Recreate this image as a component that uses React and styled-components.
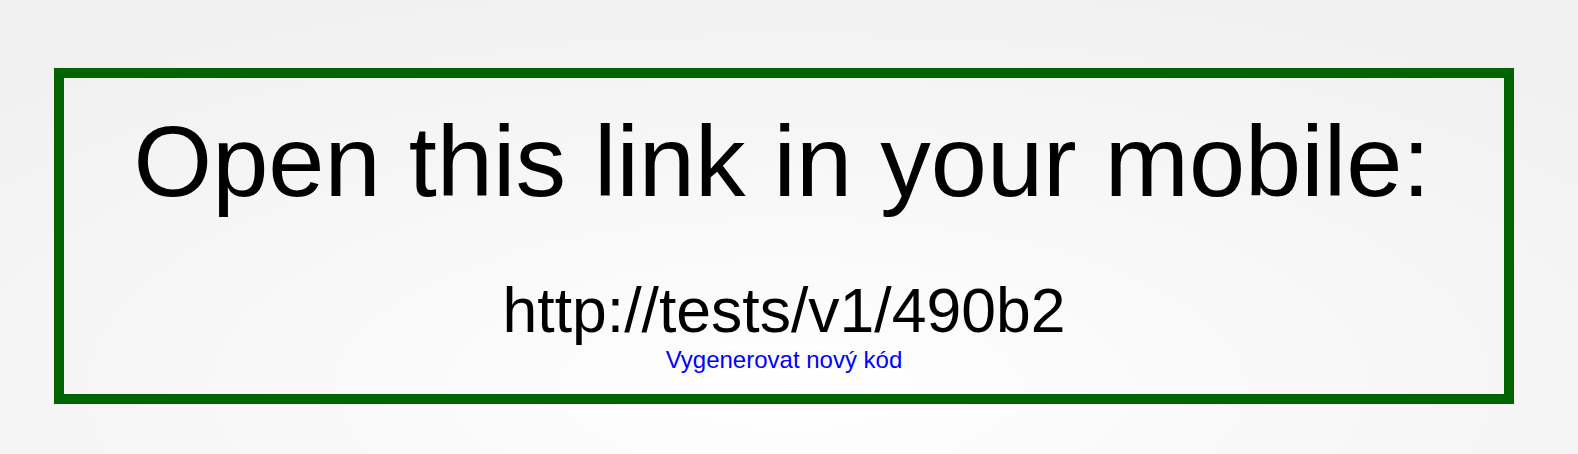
import React from "react";
import styled, { createGlobalStyle } from "styled-components";

const Global = createGlobalStyle`
  html, body {
    margin: 0;
    padding: 0;
  }
  body {
    min-height: 454px;
    background: radial-gradient(ellipse 70% 90% at 50% 85%, #ffffff 0%, #f9f9f9 40%, #f1f1f1 100%);
    font-family: "Liberation Sans", Arial, Helvetica, sans-serif;
  }
`;

const Page = styled.div`
  padding: 68px 64px 0 54px;
`;

const Panel = styled.section`
  border: 10px solid #006400;
  display: flex;
  flex-direction: column;
  align-items: center;
  padding: 25px 0 21px;
  text-align: center;
`;

const Heading = styled.h1`
  margin: 0;
  font-size: 101px;
  font-weight: 400;
  line-height: 116px;
  color: #000;
  transform: translateX(-2px);
`;

const Url = styled.div`
  margin-top: 56px;
  font-size: 62.5px;
  line-height: 71px;
  color: #000;
`;

const Regenerate = styled.a`
  font-size: 24px;
  line-height: 27px;
  color: #0000ff;
  text-decoration: none;
  cursor: pointer;
`;

export default function App() {
  return (
    <>
      <Global />
      <Page>
        <Panel>
          <Heading>Open this link in your mobile:</Heading>
          <Url>http://tests/v1/490b2</Url>
          <Regenerate href="#">Vygenerovat nový kód</Regenerate>
        </Panel>
      </Page>
    </>
  );
}
